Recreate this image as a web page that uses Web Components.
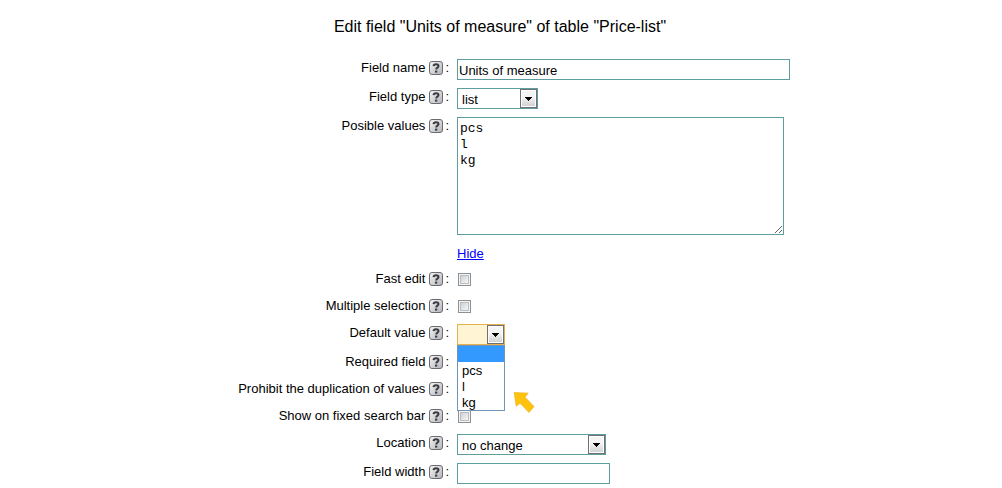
<!DOCTYPE html>
<html lang="en">
<head>
<meta charset="utf-8">
<title>Edit field</title>
<style>
body { margin: 0; background: #fff; color: #000; font: 13px/16px "Liberation Sans", Arial, sans-serif; }
</style>
</head>
<body>
<field-editor></field-editor>

<template id="editor-tpl">
<style>
:host { display: block; }
h1 { margin: 0; padding: 17px 2px 18px 0; font-size: 16px; line-height: 20px; font-weight: normal; text-align: center; }
a { display: block; color: #00f; }
</style>
<h1>Edit field "Units of measure" of table "Price-list"</h1>
<form>
<form-row><label slot="label" for="name">Field name</label><text-box id="name" label="Field name" value="Units of measure" style="--w:333px"></text-box></form-row>
<form-row><label slot="label" for="type">Field type</label><drop-down id="type" label="Field type" options="list" style="--w:81px"></drop-down></form-row>
<form-row><label slot="label" for="values">Posible values</label><text-area id="values" label="Posible values" value="pcs&#10;l&#10;kg"></text-area></form-row>
<form-row plain><a href="#hide">Hide</a></form-row>
<form-row><label slot="label" for="fast">Fast edit</label><check-box id="fast" label="Fast edit"></check-box></form-row>
<form-row><label slot="label" for="multiple">Multiple selection</label><check-box id="multiple" label="Multiple selection"></check-box></form-row>
<form-row><label slot="label" for="default">Default value</label><drop-down id="default" label="Default value" options=",pcs,l,kg" open style="--w:48px"></drop-down></form-row>
<form-row><label slot="label" for="required">Required field</label><check-box id="required" label="Required field"></check-box></form-row>
<form-row><label slot="label" for="unique">Prohibit the duplication of values</label><check-box id="unique" label="Prohibit the duplication of values"></check-box></form-row>
<form-row><label slot="label" for="search">Show on fixed search bar</label><check-box id="search" label="Show on fixed search bar"></check-box></form-row>
<form-row><label slot="label" for="location">Location</label><drop-down id="location" label="Location" options="no change" style="--w:149px"></drop-down></form-row>
<form-row><label slot="label" for="width">Field width</label><text-box id="width" label="Field width" value="" style="--w:153px"></text-box></form-row>
</form>
</template>

<script>
const define = (name, render, after, control = false) => customElements.define(name, class extends HTMLElement {
  static formAssociated = control;
  connectedCallback() {
    if (this.shadowRoot) return;
    const root = this.attachShadow({ mode: 'open', delegatesFocus: control });
    const content = render(this);
    if (typeof content === 'string') root.innerHTML = content;
    else root.append(content);
    if (after) after(this, root);
  }
});

define('help-icon', () => `
<style>
:host { display: block; width: 14px; height: 14px; }
button { display: block; width: 14px; height: 14px; padding: 0; border: 0; background: none; cursor: pointer; }
svg { display: block; }
</style>
<button type="button" aria-label="Help"><svg width="14" height="14" viewBox="0 0 14 14">
<defs><linearGradient id="g" x1="0" y1="0" x2="1" y2="1"><stop offset="0" stop-color="#f6f6f8"/><stop offset="1" stop-color="#b2b3ba"/></linearGradient></defs>
<rect x=".5" y=".5" width="13" height="13" rx="2.5" fill="url(#g)" stroke="#6c6c70"/>
<path d="M4.6 5.1C4.7 3.7 5.6 3.2 7 3.2S9.5 3.9 9.5 5.1C9.5 6.6 7.2 6.7 7.2 8.5" fill="none" stroke="#3c3c40" stroke-width="2"/>
<path d="M6 9.6h2.3v2H6z" fill="#3c3c40"/>
</svg></button>`);

define('form-row', el => `
<style>
:host { display: flex; gap: 8px; }
.label { box-sizing: border-box; flex: 0 0 calc(50% - 52px); display: flex; justify-content: flex-end; align-items: center; align-self: flex-start; height: 26px; padding-bottom: 1px; }
help-icon { margin: 0 2px 0 4px; }
.control { flex: 1; min-width: 0; padding: 4px 0; }
:host([plain]) .control { padding: 6px 0 4px; }
</style>
<div class="label">${el.hasAttribute('plain') ? '' : '<slot name="label"></slot><help-icon></help-icon><span>:</span>'}</div>
<div class="control"><slot></slot></div>`);

define('text-box', () => `
<style>
:host { display: block; }
input { display: block; box-sizing: border-box; width: var(--w); max-width: 100%; height: 21px; margin: 0; padding: 2px 1px 0; border: 1px solid #5f9ea0; background: #fff; color: #000; font: inherit; }
</style><input type="text">`, (el, root) => {
  const i = root.querySelector('input');
  i.value = el.getAttribute('value');
  i.setAttribute('aria-label', el.getAttribute('label'));
}, true);

define('text-area', () => `
<style>
:host { display: block; }
textarea { display: block; box-sizing: border-box; width: 327px; max-width: 100%; height: 118px; margin: 0 0 1px; padding: 3px 2px 2px; border: 1px solid #5f9ea0; background: #fff; color: #000; font: 13px/16px "Liberation Mono", "Courier New", monospace; }
</style><textarea></textarea>`, (el, root) => {
  const t = root.querySelector('textarea');
  t.value = el.getAttribute('value');
  t.setAttribute('aria-label', el.getAttribute('label'));
}, true);

define('check-box', () => `
<style>
:host { display: block; padding: 3px 1px; }
input { appearance: none; display: block; box-sizing: border-box; width: 13px; height: 13px; margin: 0; padding: 2px; border: 1px solid #8e8f8f; outline: 1px solid #b9bec4; outline-offset: -3px; background: linear-gradient(135deg, #cdd1d5, #f6f6f6) content-box, #f4f4f4; }
input:checked { background: #456; background-clip: content-box; }
</style><input type="checkbox">`, (el, root) => {
  const box = root.querySelector('input');
  box.setAttribute('aria-label', el.getAttribute('label'));
  el.addEventListener('click', e => { if (e.composedPath()[0] === el) box.click(); });
}, true);

define('drop-down', el => {
  const opts = el.getAttribute('options').split(',');
  return `
<style>
:host { display: block; position: relative; width: var(--w); max-width: 100%; }
select { appearance: none; display: block; box-sizing: border-box; width: 100%; height: 21px; margin: 0; padding: 2px 20px 0 4px; border: 1px solid #5f9ea0; border-radius: 0; background: #fff; color: #000; font: inherit; }
:host([open]) select { border-color: #e5b04e; background: #fff5d5; }
svg { position: absolute; top: 1px; right: 1px; pointer-events: none; }
ul { position: absolute; z-index: 1; top: 21px; left: 0; box-sizing: border-box; width: 100%; margin: 0; padding: 0; border: 1px solid #7095b8; background: #fff; list-style: none; }
li { box-sizing: border-box; height: 16px; padding: 1px 4px 0; }
li[aria-selected=true] { background: #39f; }
</style>
<select aria-label="${el.getAttribute('label')}">${opts.map(o => `<option>${o}</option>`).join('')}</select>
<svg width="17" height="19" viewBox="0 0 17 19"><defs><linearGradient id="b" x1="0" y1="0" x2="0" y2="1"><stop offset=".4" stop-color="#f4f4f4"/><stop offset="1" stop-color="#d2d2d2"/></linearGradient></defs>
<rect x=".5" y=".5" width="16" height="18" fill="#fff" stroke="#707070"/><rect x="2" y="2" width="13" height="15" fill="url(#b)"/><path d="M5 8h7v1h-1v1h-1v1H9v1H8v-1H7v-1H6V9H5z" fill="#000"/></svg>
${el.hasAttribute('open') ? `<ul role="listbox">${opts.map((o, i) => `<li role="option" aria-selected="${i === 0}">${o}</li>`).join('')}</ul><pointer-mark></pointer-mark>` : ''}`;
}, null, true);

define('pointer-mark', () => `
<style>:host { display: block; position: absolute; z-index: 2; left: 56px; top: 67px; } svg { display: block; }</style>
<svg width="22" height="23" viewBox="0 0 22 23" aria-hidden="true"><path d="M1.2 1.5 15.2 2.2 12 6.2 21 15.5 16 21.5 7 12.2 3.2 15.2z" fill="#fdc30f" stroke="#efb82a" stroke-width=".8" stroke-linejoin="round"/></svg>`);

define('field-editor', () => document.getElementById('editor-tpl').content.cloneNode(true));
</script>
</body>
</html>
